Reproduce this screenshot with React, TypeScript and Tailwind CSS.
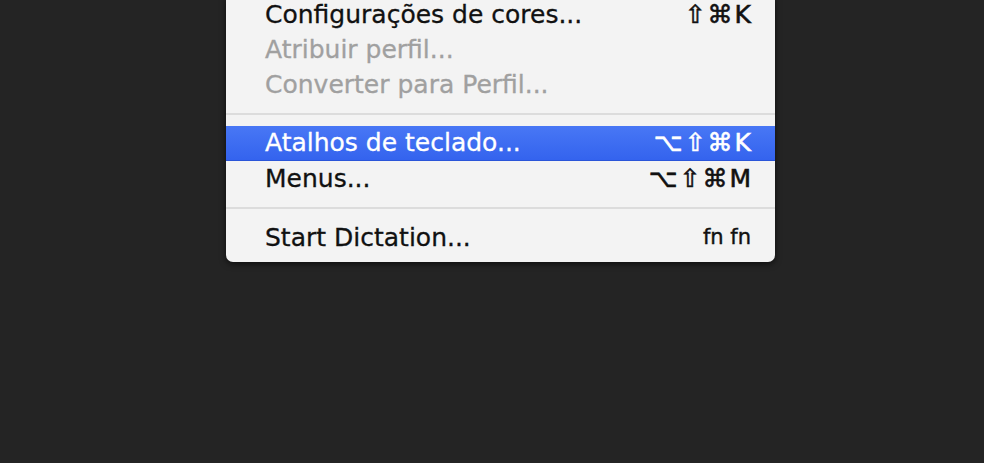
import React from "react";

type Item =
  | { kind: "item"; label: string; shortcut?: string; disabled?: boolean; active?: boolean; small?: boolean }
  | { kind: "sep" };

const items: Item[] = [
  { kind: "item", label: "Configurações de cores...", shortcut: "⇧⌘K" },
  { kind: "item", label: "Atribuir perfil...", disabled: true },
  { kind: "item", label: "Converter para Perfil...", disabled: true },
  { kind: "sep" },
  { kind: "item", label: "Atalhos de teclado...", shortcut: "⌥⇧⌘K", active: true },
  { kind: "item", label: "Menus...", shortcut: "⌥⇧⌘M" },
  { kind: "sep" },
  { kind: "item", label: "Start Dictation...", shortcut: "fn fn", small: true },
];

export default function App() {
  return (
    <div className="w-[984px] h-[463px] bg-[#242424] overflow-hidden" style={{ fontFamily: '"DejaVu Sans", "Noto Sans", sans-serif' }}>
      <div className="ml-[226px] mt-[-3px] w-[549px] bg-[#f3f3f3] rounded-b-[7px] pb-[7px] shadow-[0_2px_6px_rgba(0,0,0,0.6)]">
        {items.map((it, i) =>
          it.kind === "sep" ? (
            <div key={i} className="h-[24px] flex items-center">
              <div className="w-full h-[2px] bg-[#dcdcdc]" />
            </div>
          ) : (
            <div
              key={i}
              className={
                "h-[35px] flex items-center justify-between pl-[39px] pr-[24px] text-[25px] " +
                (it.active
                  ? "bg-gradient-to-b from-[#4877f5] to-[#3463ee] border-b border-[#2a55d8] text-white"
                  : it.disabled
                  ? "text-[#a0a0a0]"
                  : "text-[#111111]")
              }
            >
              <span className="[-webkit-text-stroke:0.3px_currentColor]">{it.label}</span>
              {it.shortcut && (
                <span
                  className={
                    it.small
                      ? "text-[21px] [-webkit-text-stroke:0.4px_currentColor]"
                      : "text-[25px] tracking-[2px] mr-[-2px] [-webkit-text-stroke:0.6px_currentColor]"
                  }
                >
                  {it.shortcut}
                </span>
              )}
            </div>
          )
        )}
      </div>
    </div>
  );
}
